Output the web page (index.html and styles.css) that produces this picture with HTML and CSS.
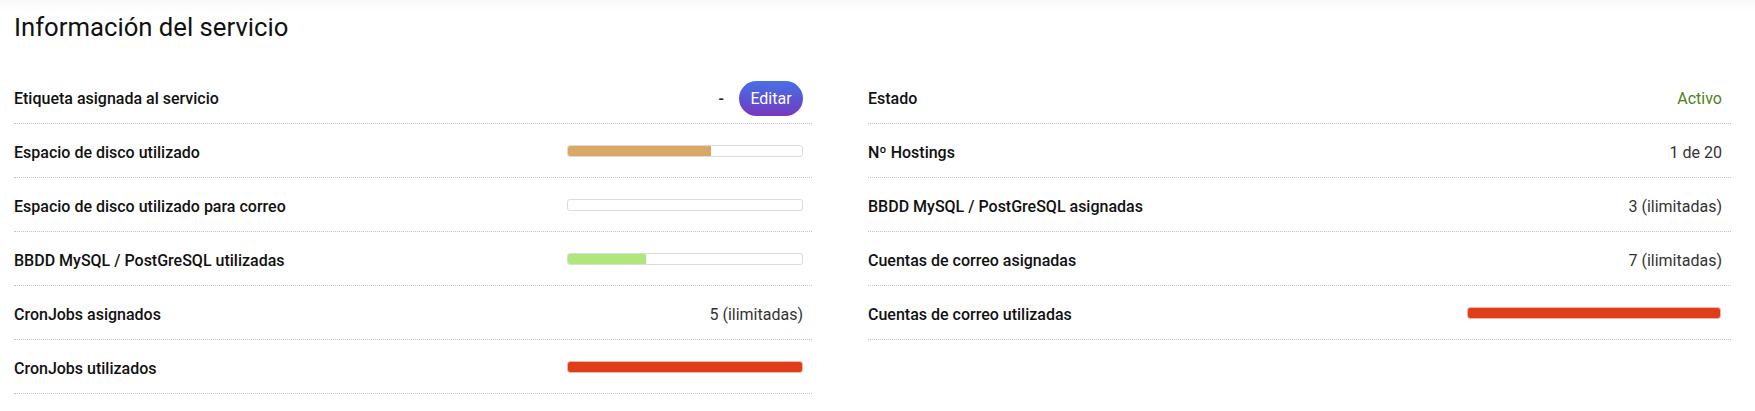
FILE: index.html
```html
<!DOCTYPE html>
<html lang="es">
<head>
<meta charset="utf-8">
<title>Información del servicio</title>
<link rel="stylesheet" href="styles.css">
</head>
<body>
<div class="page">
  <h1 class="title">Información del servicio</h1>
  <div class="grid">
    <div class="col">
      <div class="row">
        <span class="label">Etiqueta asignada al servicio</span>
        <span class="value tag"><span class="dash">-</span><button class="btn">Editar</button></span>
      </div>
      <div class="row">
        <span class="label">Espacio de disco utilizado</span>
        <span class="bar bar-left"><span class="fill gold" style="width:61%"></span></span>
      </div>
      <div class="row">
        <span class="label">Espacio de disco utilizado para correo</span>
        <span class="bar bar-left"><span class="fill" style="width:0%"></span></span>
      </div>
      <div class="row">
        <span class="label">BBDD MySQL / PostGreSQL utilizadas</span>
        <span class="bar bar-left"><span class="fill green" style="width:33.5%"></span></span>
      </div>
      <div class="row">
        <span class="label">CronJobs asignados</span>
        <span class="value">5 (ilimitadas)</span>
      </div>
      <div class="row">
        <span class="label">CronJobs utilizados</span>
        <span class="bar bar-left full"><span class="fill red" style="width:100%"></span></span>
      </div>
    </div>
    <div class="col">
      <div class="row">
        <span class="label">Estado</span>
        <span class="value active">Activo</span>
      </div>
      <div class="row">
        <span class="label">Nº Hostings</span>
        <span class="value">1 de 20</span>
      </div>
      <div class="row">
        <span class="label">BBDD MySQL / PostGreSQL asignadas</span>
        <span class="value">3 (ilimitadas)</span>
      </div>
      <div class="row">
        <span class="label">Cuentas de correo asignadas</span>
        <span class="value">7 (ilimitadas)</span>
      </div>
      <div class="row">
        <span class="label">Cuentas de correo utilizadas</span>
        <span class="bar bar-right full"><span class="fill red" style="width:100%"></span></span>
      </div>
    </div>
  </div>
</div>
</body>
</html>
```

FILE: styles.css
```css
* { box-sizing: border-box; }
html, body { margin: 0; padding: 0; background: #fff; }
body {
  font-family: Roboto, "Liberation Sans", sans-serif;
  color: #111;
  background: linear-gradient(#f9f9f9 0, #fdfdfd 8px, #fff 12px);
}
.page {
  padding: 12px 24px 0 14px;
}
.title {
  margin: 0;
  font-size: 25.7px;
  font-weight: 400;
  line-height: 31px;
  color: #111;
}
.grid {
  display: grid;
  grid-template-columns: 798px 863px;
  column-gap: 56px;
  margin-top: 27px;
}
.col {
  display: flex;
  flex-direction: column;
}
.row {
  height: 54px;
  display: flex;
  align-items: center;
  justify-content: space-between;
  padding: 4px 9px 0 0;
  border-bottom: 1px dotted #c4c4c4;
}
.label {
  font-size: 16px;
  font-weight: 500;
  color: #111;
}
.value {
  font-size: 16px;
  color: #333;
}
.value.active { color: #4f7f1c; }
.tag {
  display: flex;
  align-items: center;
  gap: 15px;
}
.dash { color: #222; font-weight: 500; }
.btn {
  width: 64px;
  height: 35px;
  border: 0;
  border-radius: 18px;
  background: linear-gradient(#4870e4, #5a55d6 50%, #7a38bd);
  color: #fff;
  font-family: Roboto, "Liberation Sans", sans-serif;
  font-size: 16px;
  padding: 0;
  cursor: pointer;
}
.bar {
  display: block;
  height: 12px;
  border: 1px solid #dcdcdc;
  border-radius: 3px;
  background: #fff;
  overflow: hidden;
  margin-top: -4px;
}
.bar-left { width: 236px; }
.bar-right { width: 254px; margin-right: 1px; }
.fill { display: block; height: 100%; }
.gold { background: #d8a864; }
.green { background: #aee87a; }
.red { background: #e03e18; }
.bar.full { border-color: #e8b8aa; }
```
